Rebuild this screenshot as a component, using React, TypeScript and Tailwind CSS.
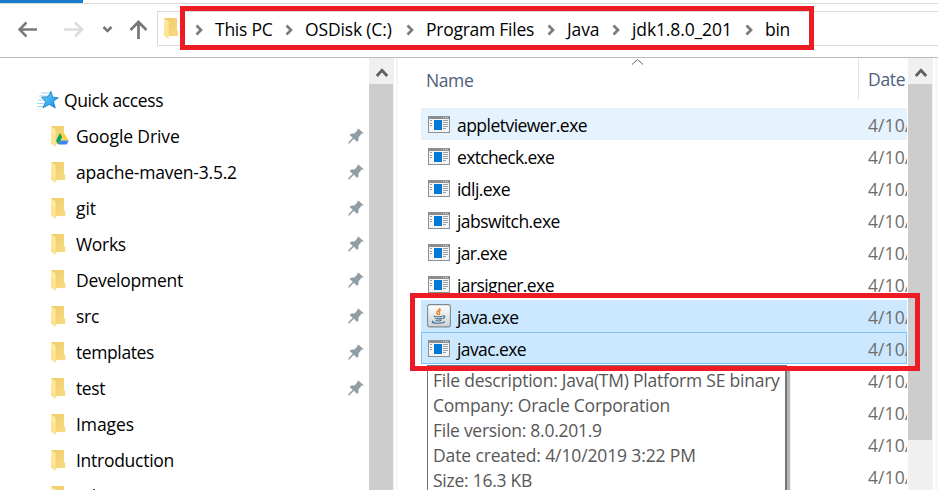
import React from "react";

const ui = "font-['Open_Sans','Noto_Sans',sans-serif]";

const crumbs = [
  { label: "This PC", x: "w-[90px]", t: "tracking-[-0.25px]" },
  { label: "OSDisk (C:)", x: "w-[121px]", t: "tracking-[-0.15px]" },
  { label: "Program Files", x: "w-[141px]", t: "tracking-[-0.25px]" },
  { label: "Java", x: "w-[65px]", t: "tracking-[-0.1px]" },
  { label: "jdk1.8.0_201", x: "w-[133px]", t: "tracking-[-0.12px]" },
  { label: "bin", x: "w-[60px]", t: "tracking-[-0.3px]" },
];

const places = [
  { label: "Google Drive", pinned: true, t: "tracking-[-0.1px]" },
  { label: "apache-maven-3.5.2", pinned: true, t: "tracking-[-0.22px]" },
  { label: "git", pinned: true, t: "tracking-[-0.1px]" },
  { label: "Works", pinned: true, t: "tracking-[-0.3px]" },
  { label: "Development", pinned: true, t: "tracking-[-0.25px]" },
  { label: "src", pinned: true, t: "tracking-[-0.3px]" },
  { label: "templates", pinned: true, t: "tracking-[-0.4px]" },
  { label: "test", pinned: true, t: "tracking-[-0.4px]" },
  { label: "Images", pinned: false, t: "tracking-[-0.1px]" },
  { label: "Introduction", pinned: false, t: "tracking-[-0.27px]" },
  { label: "Edges", pinned: false, t: "tracking-[-0.2px]" },
];

const files = [
  { label: "appletviewer.exe", row: "bg-[#e5f3ff]", t: "tracking-[-0.53px]" },
  { label: "extcheck.exe", row: "", t: "tracking-[-0.66px]" },
  { label: "idlj.exe", row: "", t: "tracking-[-0.55px]" },
  { label: "jabswitch.exe", row: "", t: "tracking-[-0.55px]" },
  { label: "jar.exe", row: "", t: "tracking-[-0.7px]" },
  { label: "jarsigner.exe", row: "", t: "tracking-[-0.6px]" },
  { label: "java.exe", row: "bg-[#cce8ff]", t: "tracking-[-0.55px]" },
  { label: "javac.exe", row: "bg-[#cce8ff] shadow-[inset_0_0_0_1px_#7cc3fb]", t: "tracking-[-0.6px]" },
  { label: "", row: "", t: "" },
  { label: "", row: "", t: "" },
  { label: "", row: "", t: "" },
  { label: "", row: "", t: "" },
];

const details = [
  { label: "File description: Java(TM) Platform SE binary", t: "tracking-[-0.22px]" },
  { label: "Company: Oracle Corporation", t: "tracking-[-0.23px]" },
  { label: "File version: 8.0.201.9", t: "tracking-[-0.27px]" },
  { label: "Date created: 4/10/2019 3:22 PM", t: "tracking-[-0.13px]" },
  { label: "Size: 16.3 KB", t: "tracking-[-0.25px]" },
];

function Folder() {
  return (
    <svg width="15" height="22" viewBox="0 0 15 22" className="shrink-0">
      <defs>
        <linearGradient id="folderBack" x1="0" y1="0" x2="1" y2="1">
          <stop offset="0" stopColor="#edcb6b" />
          <stop offset="1" stopColor="#fadb83" />
        </linearGradient>
        <linearGradient id="folderFront" x1="0" y1="0" x2="0" y2="1">
          <stop offset="0" stopColor="#ffe9a6" />
          <stop offset="1" stopColor="#ffe08a" />
        </linearGradient>
      </defs>
      <path d="M0 0H13V12L14.3 13V18H4L0 3Z" fill="url(#folderBack)" />
      <path d="M0 0L4.7 3.5V21.3L0 17.5Z" fill="url(#folderFront)" />
    </svg>
  );
}

function DriveBadge() {
  return (
    <svg width="13" height="12" viewBox="0 0 13 12" className="absolute left-[5px] top-[8px]">
      <path d="M4 0H8L12.7 7.5H8.4Z" fill="#ffcf3f" />
      <path d="M4 0L6.2 4L2.3 11.5L0 7.5Z" fill="#11a05c" />
      <path d="M4.2 7.5H12.7L10.8 11.5H2.3Z" fill="#4286f5" />
    </svg>
  );
}

function Star() {
  return (
    <svg width="23" height="20" viewBox="0 0 23 20" className="shrink-0">
      <defs>
        <linearGradient id="star" x1="0" y1="0" x2="1" y2="1">
          <stop offset="0" stopColor="#6fd0ff" />
          <stop offset="1" stopColor="#0b94e4" />
        </linearGradient>
      </defs>
      <path d="M4 3H13M2 6H11M1 10H9M0 13.5H6M0 16.5H6" stroke="#a5d4f2" strokeWidth="1" />
      <path d="M14 1.5L15.6 7.2L21.3 7.7L16.4 11.2L18.2 18L12.4 14.4L6 17.8L8.6 11.4L4.6 7.2L10.9 6.9Z" fill="url(#star)" stroke="#2381bf" strokeWidth="0.9" strokeLinejoin="round" />
    </svg>
  );
}

function Pin() {
  return (
    <svg width="17" height="17" viewBox="0 0 17 17" className="shrink-0">
      <path d="M10 0.2L15.7 5.2L13.5 5.7L10.7 9.2L10.2 13L8.8 13.7L5.8 10.8L1.3 15.6L0.2 15.5L0.6 14L4.7 9.8L1.7 7L2.8 5.7L6.8 5.2L9.2 2.5Z" fill="#919da5" />
    </svg>
  );
}

function AppIcon() {
  return (
    <svg width="22" height="17" viewBox="0 0 22 17">
      <rect width="22" height="17" fill="#8a8e90" />
      <rect x="1" y="3" width="20" height="13" fill="#f5f5f5" />
      <rect x="6" y="4" width="8" height="10" fill="#0078d7" />
      <path d="M2 4.5H4M2 7.5H4M2 9.5H4M15 4.5H20M15 6.5H20M15 8.5H20M15 10.5H20M15 12.5H18" stroke="#9b9e9f" strokeWidth="1" />
      <path d="M15 1.5H16M17 1.5H18M19 1.5H20" stroke="#e0e0e0" strokeWidth="1" />
    </svg>
  );
}

function JavaIcon() {
  return (
    <svg width="24" height="24" viewBox="0 0 24 24">
      <defs>
        <linearGradient id="tile" x1="0" y1="0" x2="0" y2="1">
          <stop offset="0" stopColor="#fff" />
          <stop offset="1" stopColor="#cdd1d3" />
        </linearGradient>
      </defs>
      <rect x="0.6" y="0.6" width="22.8" height="22.3" rx="2.2" fill="url(#tile)" stroke="#7d8a92" strokeWidth="1.1" />
      <path d="M12.8 4C13.5 6.3 9.2 6.6 9.8 9C10 10 11 10.2 11.2 11.2M14 6.2C11.5 7.2 11.6 8.2 12.6 9.4C13 10.1 12.3 10.7 12.1 11" stroke="#f08024" strokeWidth="1.4" fill="none" />
      <path d="M7.5 11.8C6 12.8 11 13.1 15.5 12.2M8 14C9 15.2 13 15 15 14.4M8.7 16C10 17.1 13 16.9 14.5 16.2M15.8 11.9C18.5 11.3 18.2 13.8 15.7 14.7M6.5 17.1C3 18.1 7 19.4 12 19.2C16 19 18.2 18.3 17 17.3" stroke="#426f94" strokeWidth="1.15" fill="none" />
    </svg>
  );
}

function Crumb() {
  return (
    <svg width="9" height="12" viewBox="0 0 9 12" className="mt-px shrink-0">
      <path d="M1.5 1.5L6 6L1.5 10.5" fill="none" stroke="#7c7c7c" strokeWidth="2.7" />
    </svg>
  );
}

function ScrollBar({ thumb }: { thumb: string }) {
  return (
    <div className="flex w-[25px] shrink-0 flex-col bg-[#f0f0f0]">
      <div className="flex h-[26px] shrink-0 justify-center pt-[10px]">
        <svg width="12" height="10" viewBox="0 0 12 10">
          <path d="M0.8 8L6 2.4L11.2 8" fill="none" stroke="#606060" strokeWidth="2.8" />
        </svg>
      </div>
      <div className={`w-[24px] shrink-0 bg-[#cdcdcd] ${thumb}`} />
    </div>
  );
}

export default function App() {
  return (
    <div className={`relative flex h-[490px] w-[938px] flex-col overflow-hidden bg-white text-[17.5px] leading-6 whitespace-nowrap text-black ${ui}`}>
      <div className="h-[3px] w-[83px] shrink-0 bg-[#1979ca]" />
      <header className="flex h-[55px] shrink-0 border-t border-b border-t-[#d9d9d9] border-b-[#b9b9b9] pt-[7px]">
        <div className="flex w-[157px] shrink-0 pl-[18px]">
          <svg width="130" height="34" viewBox="0 0 130 34" fill="none">
            <path d="M19 18.5H1.5M8.5 11.5L1.5 18.5L8.5 25.5" stroke="#7a7a7a" strokeWidth="2.5" />
            <path d="M46 18.5H64M57 11.5L64 18.5L57 25.5" stroke="#dcdcdc" strokeWidth="2.5" />
            <path d="M85.5 16L89.5 20L93.5 16" stroke="#777" strokeWidth="2.5" />
            <path d="M120.5 28V11.5M112.5 19L120.5 11L128.5 19" stroke="#777" strokeWidth="2.7" />
          </svg>
        </div>
        <div className="flex h-[35px] flex-1 border border-r-0 border-[#d9d9d9] pt-[6px] pl-[6px]">
          <Folder />
          <nav className="-mt-px ml-[16px] flex h-[24px] items-center">
            {crumbs.map((c) => (
              <div key={c.label} className={`flex shrink-0 items-center ${c.x}`}>
                <Crumb />
                <span className={`-mt-px ml-[11px] ${c.t}`}>{c.label}</span>
              </div>
            ))}
          </nav>
        </div>
      </header>

      <div className="flex min-h-0 flex-1">
        <aside className="w-[369px] shrink-0 overflow-hidden pt-[24px]">
          <div className="flex h-9 items-center pl-[37px]">
            <Star />
            <span className="ml-[4px] tracking-[-0.4px]">Quick access</span>
          </div>
          {places.map((p, i) => (
            <div key={p.label} className="flex h-9 items-center pl-[51px]">
              <div className="relative flex w-[25px] shrink-0 pt-px">
                <Folder />
                {i === 0 && <DriveBadge />}
              </div>
              <span className={`w-[272px] ${p.t}`}>{p.label}</span>
              {p.pinned && <Pin />}
            </div>
          ))}
        </aside>
        <ScrollBar thumb="h-[406px]" />
        <main className="ml-[2px] flex min-w-0 flex-1 border-l-2 border-[#f5f5f5] pl-[23px]">
          <div className="flex w-[486px] shrink-0 flex-col overflow-hidden">
            <div className="flex h-[50px] shrink-0 text-[#4c607a]">
              <div className="relative flex h-[41px] w-[438px] shrink-0 items-center border-r border-[#e2e2e2] pb-px pl-[5px]">
                <span className="mt-[3px] tracking-[-0.4px]">Name</span>
                <svg width="13" height="8" viewBox="0 0 13 8" className="absolute top-0 left-[210px]">
                  <path d="M1 6.5L6.5 1.5L12 6.5" fill="none" stroke="#666" />
                </svg>
              </div>
              <span className="mt-[9px] ml-[9px] tracking-[-0.3px]">Date</span>
            </div>
            {files.map((f, i) => (
              <div key={i} className={`flex h-8 shrink-0 items-center ${f.row}`}>
                <div className={`flex w-[36px] shrink-0 ${f.label === "java.exe" ? "pl-[6px]" : "pl-[7px]"}`}>
                  {f.label === "java.exe" ? <JavaIcon /> : f.label ? <AppIcon /> : null}
                </div>
                <span className={`w-[411px] shrink-0 pt-px ${f.t}`}>{f.label}</span>
                <span className="pt-px tracking-[0.1px] text-[#6d6d6d]">4/10/2019</span>
              </div>
            ))}
          </div>
          <div className="ml-px flex w-[27px] shrink-0">
            <ScrollBar thumb="h-[356px]" />
          </div>
          <div className="w-[3px] shrink-0 bg-[#f7f7f7]" />
        </main>
      </div>

      <div className="absolute top-[365px] left-[427px] w-[360px] border border-r-2 border-[#767676] bg-white pt-[2px] pl-[5px] text-[#575757] shadow-[3px_3px_1px_#b5b5b5]">
        {details.map((d) => (
          <div key={d.label} className={`h-[25px] ${d.t}`}>{d.label}</div>
        ))}
      </div>
      <div className="absolute top-[6px] left-[180px] h-[44px] w-[634px] border-5 border-[#ed1c24]" />
      <div className="absolute top-[293px] left-[410px] h-[78px] w-[510px] border-5 border-[#ed1c24]" />
    </div>
  );
}
